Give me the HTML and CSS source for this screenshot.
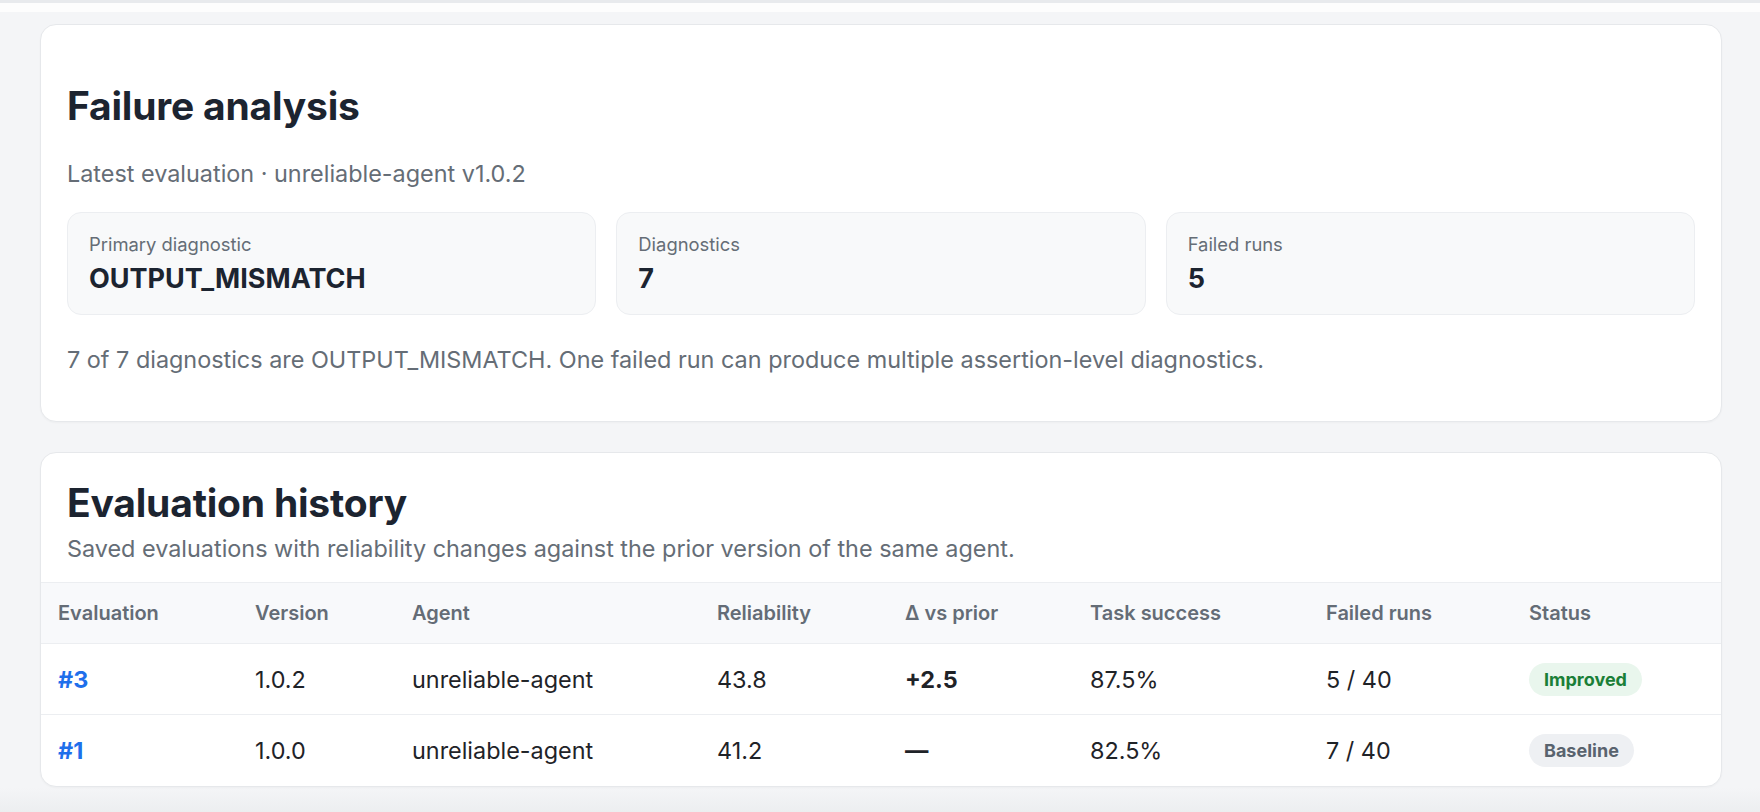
FILE: index.html
```html
<!DOCTYPE html>
<html lang="en">
<head>
<meta charset="utf-8">
<title>Agent reliability</title>
<link rel="stylesheet" href="styles.css">
</head>
<body>
<div class="topbar"></div>
<main class="page">
  <section class="card analysis">
    <h2 class="card-title">Failure analysis</h2>
    <p class="lead">Latest evaluation · unreliable-agent v1.0.2</p>
    <div class="stats">
      <div class="stat">
        <div class="stat-label">Primary diagnostic</div>
        <div class="stat-value">OUTPUT_MISMATCH</div>
      </div>
      <div class="stat">
        <div class="stat-label">Diagnostics</div>
        <div class="stat-value">7</div>
      </div>
      <div class="stat">
        <div class="stat-label">Failed runs</div>
        <div class="stat-value">5</div>
      </div>
    </div>
    <p class="note">7 of 7 diagnostics are OUTPUT_MISMATCH. One failed run can produce multiple assertion-level diagnostics.</p>
  </section>

  <section class="card history">
    <div class="history-head">
      <h2 class="card-title">Evaluation history</h2>
      <p class="sub">Saved evaluations with reliability changes against the prior version of the same agent.</p>
    </div>
    <table class="runs">
      <colgroup>
        <col class="c-eval"><col class="c-ver"><col class="c-agent"><col class="c-rel">
        <col class="c-delta"><col class="c-task"><col class="c-failed"><col class="c-status">
      </colgroup>
      <thead>
        <tr>
          <th>Evaluation</th><th>Version</th><th>Agent</th><th>Reliability</th>
          <th>Δ vs prior</th><th>Task success</th><th>Failed runs</th><th>Status</th>
        </tr>
      </thead>
      <tbody>
        <tr>
          <td><a class="run-link" href="#">#3</a></td>
          <td>1.0.2</td>
          <td>unreliable-agent</td>
          <td>43.8</td>
          <td class="delta">+2.5</td>
          <td>87.5%</td>
          <td>5 / 40</td>
          <td><span class="badge badge-up">Improved</span></td>
        </tr>
        <tr>
          <td><a class="run-link" href="#">#1</a></td>
          <td>1.0.0</td>
          <td>unreliable-agent</td>
          <td>41.2</td>
          <td class="delta">—</td>
          <td>82.5%</td>
          <td>7 / 40</td>
          <td><span class="badge badge-base">Baseline</span></td>
        </tr>
      </tbody>
    </table>
  </section>
</main>
</body>
</html>
```

FILE: styles.css
```css
html, body {
  margin: 0;
  min-height: 100%;
}

body {
  background: linear-gradient(to bottom, #f4f5f7 calc(100% - 24px), #eceef0 100%);
  min-height: 812px;
  font-family: Inter, "Noto Sans", "Liberation Sans", sans-serif;
  color: #1f2328;
}

/* bottom edge of the app header */
.topbar {
  height: 12px;
  box-sizing: border-box;
  background: #fdfdfd;
  border-top: 3px solid #e8eaed;
}

.page {
  display: flex;
  flex-direction: column;
  gap: 30px;
  padding: 12px 38px 0 40px;
}

.card {
  background: #fff;
  border: 1px solid #e6e8eb;
  border-radius: 16px;
  box-shadow: 0 1px 2px rgba(16, 24, 40, 0.03);
}

.card-title {
  margin: 0;
  font-size: 39px;
  line-height: 46px;
  font-weight: 700;
  letter-spacing: -0.2px;
  color: #1c2430;
}

/* Failure analysis */
.analysis {
  height: 398px;
  box-sizing: border-box;
  padding: 58px 26px 0 26px;
}

.lead {
  margin: 29px 0 0 0;
  font-size: 23.4px;
  line-height: 32px;
  color: #656d76;
}

.stats {
  display: grid;
  grid-template-columns: repeat(3, 1fr);
  gap: 20px;
  margin-top: 22px;
}

.stat {
  background: #f8f9fa;
  border: 1px solid #eceef1;
  border-radius: 14px;
  padding: 19px 21px 19px 21px;
}

.stat-label {
  font-size: 18.4px;
  line-height: 24px;
  color: #656d76;
}

.stat-value {
  margin-top: 7px;
  font-size: 27px;
  line-height: 32px;
  font-weight: 700;
  color: #1c2430;
}

.note {
  margin: 29px 0 0 0;
  font-size: 23.4px;
  line-height: 32px;
  color: #656d76;
}

/* Evaluation history */
.history {
  overflow: hidden;
}

.history-head {
  padding: 27px 26px 17px 26px;
}

.sub {
  margin: 7px 0 0 0;
  font-size: 23.4px;
  line-height: 32px;
  color: #656d76;
}

.runs {
  width: 100%;
  table-layout: fixed;
  border-collapse: collapse;
}

.c-eval { width: 197px; }
.c-ver { width: 157px; }
.c-agent { width: 305px; }
.c-rel { width: 188px; }
.c-delta { width: 185px; }
.c-task { width: 236px; }
.c-failed { width: 203px; }
.c-status { width: 209px; }

.runs th {
  height: 60px;
  padding: 0 17px;
  text-align: left;
  font-size: 20px;
  font-weight: 600;
  color: #646c76;
  background: #f8f9fb;
  border-top: 1px solid #eceef1;
  border-bottom: 1px solid #eceef1;
}

.runs td {
  height: 71px;
  padding: 0 17px;
  font-size: 23.4px;
  color: #1f2328;
  border-top: 1px solid #eceef1;
  vertical-align: middle;
}

.runs tbody tr:first-child td {
  border-top: none;
  height: 70px;
}

.run-link {
  color: #1f6feb;
  font-weight: 700;
  text-decoration: none;
}

.delta {
  font-weight: 700;
}

.badge {
  display: inline-block;
  padding: 5px 15px;
  border-radius: 999px;
  font-size: 18px;
  line-height: 23px;
  font-weight: 700;
}

.badge-up {
  background: #e9f6ed;
  color: #1a7f37;
}

.badge-base {
  background: #eef0f3;
  color: #59636e;
}
```
